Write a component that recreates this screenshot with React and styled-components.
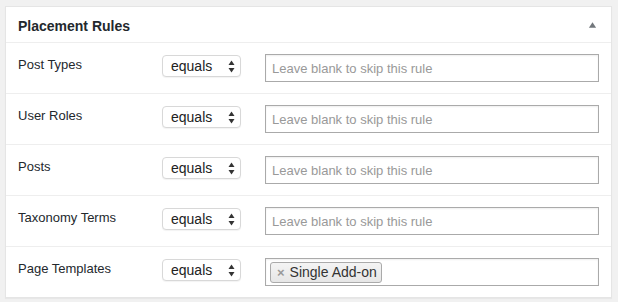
import React from 'react'
import styled, { createGlobalStyle } from 'styled-components'

const GlobalStyle = createGlobalStyle`
  html, body {
    margin: 0;
    padding: 0;
    background: #f1f1f1;
  }
  body {
    font-family: "Liberation Sans", Arial, sans-serif;
    color: #23282d;
  }
`

const rules = [
  { label: 'Post Types' },
  { label: 'User Roles' },
  { label: 'Posts' },
  { label: 'Taxonomy Terms' },
  { label: 'Page Templates', tags: ['Single Add-on'] },
]

function App() {
  return (
    <>
      <GlobalStyle />
      <Page>
        <Panel>
          <Header>
            <Title>Placement Rules</Title>
            <Toggle viewBox="0 0 10 8" aria-hidden="true">
              <path d="M5 1 L9 7 L1 7 Z" fill="#72777c" />
            </Toggle>
          </Header>
          {rules.map((rule) => (
            <Row key={rule.label}>
              <Label>{rule.label}</Label>
              <SelectBox>
                <span>equals</span>
                <svg width="7" height="13" viewBox="0 0 7 13" aria-hidden="true">
                  <path d="M3.5 0.5 L6.5 5 L0.5 5 Z" fill="#333" />
                  <path d="M3.5 12.5 L6.5 8 L0.5 8 Z" fill="#333" />
                </svg>
              </SelectBox>
              <Field>
                {rule.tags ? (
                  rule.tags.map((t) => (
                    <Tag key={t}>
                      <Remove>×</Remove>
                      {t}
                    </Tag>
                  ))
                ) : (
                  <Placeholder>Leave blank to skip this rule</Placeholder>
                )}
              </Field>
            </Row>
          ))}
        </Panel>
      </Page>
    </>
  )
}

export default App

const Page = styled.div`
  padding: 6px 6px 5px 5px;
`

const Panel = styled.div`
  background: #fff;
  border: 1px solid #e5e5e5;
  box-shadow: 0 1px 1px rgba(0, 0, 0, 0.04);
`

const Header = styled.div`
  display: flex;
  align-items: center;
  justify-content: space-between;
  height: 35px;
  padding: 0 14px 0 12px;
  border-bottom: 1px solid #eee;
`

const Title = styled.span`
  font-size: 14px;
  font-weight: 700;
  color: #23282d;
  padding-top: 2px;
`

const Toggle = styled.svg`
  width: 9px;
  height: 8px;
`

const Row = styled.div`
  display: grid;
  grid-template-columns: 144px 103px 1fr;
  align-items: start;
  height: 51px;
  box-sizing: border-box;
  padding: 11px 12px 0 12px;
  border-bottom: 1px solid #eee;
  &:last-child {
    height: 50px;
    border-bottom: none;
  }
`

const Label = styled.span`
  font-size: 13px;
  line-height: 18px;
  margin-top: 2px;
  color: #23282d;
`

const SelectBox = styled.div`
  display: flex;
  align-items: center;
  justify-content: space-between;
  width: 79px;
  height: 22px;
  box-sizing: border-box;
  margin-top: 1px;
  padding: 0 5px 0 8px;
  border: 1px solid #d8d8d8;
  border-radius: 4px;
  background: #fff;
  box-shadow: 0 1px 1px rgba(0, 0, 0, 0.05);
  font-size: 14px;
  color: #222;
`

const Field = styled.div`
  display: flex;
  align-items: center;
  height: 28px;
  box-sizing: border-box;
  padding: 0 6px;
  border: 1px solid #aaa;
  background: #fff;
  box-shadow: inset 0 1px 2px rgba(0, 0, 0, 0.07);
`

const Placeholder = styled.span`
  font-size: 13px;
  color: #999;
`

const Tag = styled.span`
  display: inline-flex;
  align-items: center;
  height: 21px;
  box-sizing: border-box;
  margin-left: -2px;
  padding: 0 4px 0 6px;
  border: 1px solid #aaa;
  border-radius: 3px;
  background: linear-gradient(#f4f4f4, #e6e6e6);
  font-size: 14px;
  color: #333;
`

const Remove = styled.span`
  font-size: 13px;
  font-weight: 700;
  color: #999;
  margin-right: 5px;
`
